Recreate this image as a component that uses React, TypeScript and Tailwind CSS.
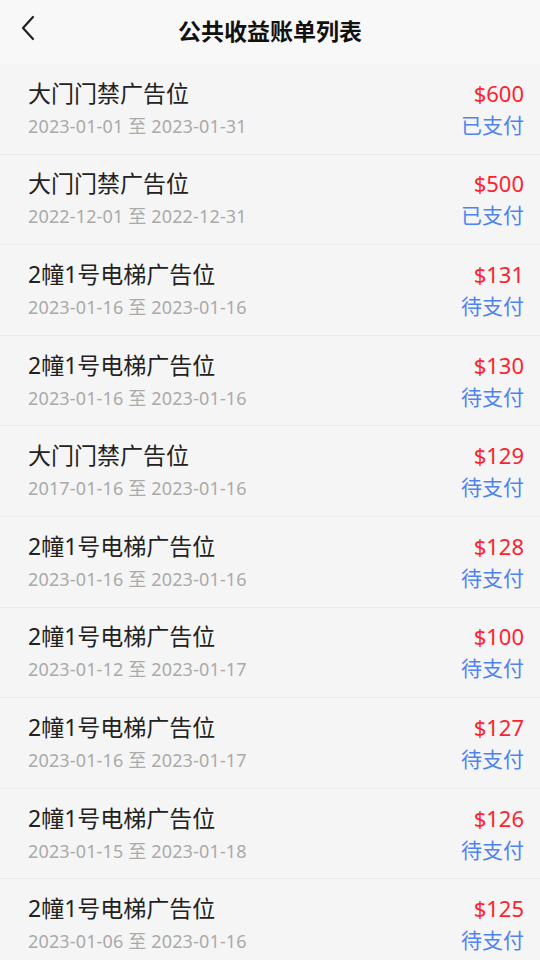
const bills = [
  { name: '大门门禁广告位', start: '2023-01-01', end: '2023-01-31', amount: 600, paid: true },
  { name: '大门门禁广告位', start: '2022-12-01', end: '2022-12-31', amount: 500, paid: true },
  { name: '2幢1号电梯广告位', start: '2023-01-16', end: '2023-01-16', amount: 131, paid: false },
  { name: '2幢1号电梯广告位', start: '2023-01-16', end: '2023-01-16', amount: 130, paid: false },
  { name: '大门门禁广告位', start: '2017-01-16', end: '2023-01-16', amount: 129, paid: false },
  { name: '2幢1号电梯广告位', start: '2023-01-16', end: '2023-01-16', amount: 128, paid: false },
  { name: '2幢1号电梯广告位', start: '2023-01-12', end: '2023-01-17', amount: 100, paid: false },
  { name: '2幢1号电梯广告位', start: '2023-01-16', end: '2023-01-17', amount: 127, paid: false },
  { name: '2幢1号电梯广告位', start: '2023-01-15', end: '2023-01-18', amount: 126, paid: false },
  { name: '2幢1号电梯广告位', start: '2023-01-06', end: '2023-01-16', amount: 125, paid: false },
];

export default function App() {
  return (
    <div
      className="w-[540px] h-[960px] overflow-hidden bg-[#f5f5f5]"
      style={{ fontFamily: '"Noto Sans", "Noto Sans CJK SC", sans-serif' }}
    >
      {/* 顶部导航 */}
      <header className="relative h-[64px] bg-[#f8f8f8] flex items-center justify-center">
        <button className="absolute left-[16px] top-[14px] w-[24px] h-[28px] flex items-center justify-center">
          <svg width="16" height="26" viewBox="0 0 16 26" fill="none">
            <path d="M13 2 L3 13 L13 24" stroke="#222" strokeWidth="2.2" strokeLinecap="round" strokeLinejoin="round" />
          </svg>
        </button>
        <h1 className="text-[23px] font-bold text-[#111] leading-none -mt-[2px]">公共收益账单列表</h1>
      </header>

      {/* 账单列表 */}
      <ul>
        {bills.map((b, i) => (
          <li
            key={i}
            className="h-[90.6px] border-b border-[#ebebeb] pl-[28px] pr-[16px] flex items-center justify-between"
          >
            <div className="flex flex-col gap-[9px] -mt-[1px]">
              <div className="text-[23px] leading-[26px] text-[#222]">{b.name}</div>
              <div className="text-[18px] leading-[22px] tracking-[0.15px] text-[#aaaaaa]">
                {b.start} 至 {b.end}
              </div>
            </div>
            <div className="flex flex-col items-end gap-[6px] mt-0">
              <div className="text-[22px] leading-[26px] text-[#ff1f2f]">${b.amount}</div>
              <div className="text-[21px] leading-[26px] text-[#4f83f1]">{b.paid ? '已支付' : '待支付'}</div>
            </div>
          </li>
        ))}
      </ul>
    </div>
  );
}
